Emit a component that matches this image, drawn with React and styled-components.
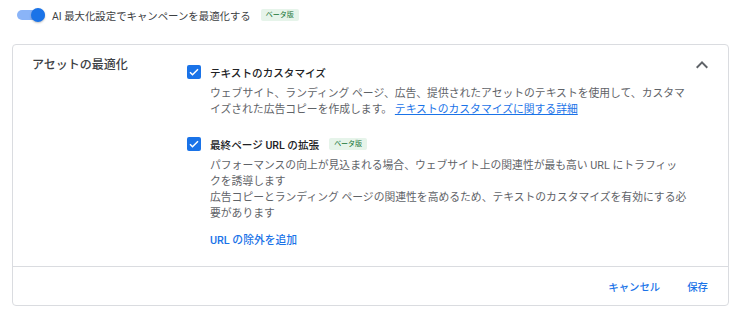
import styled, { createGlobalStyle } from "styled-components";

const GlobalStyle = createGlobalStyle`
  body {
    margin: 0;
    background: #fff;
    font-family: Roboto, "Noto Sans CJK JP", sans-serif;
    color: #3c4043;
  }
`;

const Page = styled.div`
  width: 741px;
  padding: 0 12px;
  box-sizing: border-box;
`;

const TopRow = styled.div`
  display: flex;
  align-items: center;
  height: 30px;
  padding-left: 5px;
  margin-bottom: 14px;
  font-size: 10.4px;
  color: #3c4043;
`;

const Toggle = styled.div`
  position: relative;
  width: 28px;
  height: 10px;
  border-radius: 5px;
  background: #8ab4f8;
  margin-right: 7px;
  & > span {
    position: absolute;
    right: 0;
    top: -2px;
    width: 14px;
    height: 14px;
    border-radius: 50%;
    background: #1a73e8;
    box-shadow: 0 1px 2px rgba(0, 0, 0, 0.25);
  }
`;

const Badge = styled.span`
  display: inline-block;
  margin-left: 10px;
  padding: 1px 5px;
  font-size: 7px;
  line-height: 10px;
  font-weight: 400;
  border-radius: 2px;
  background: #e6f4ea;
  color: #137333;
`;

const Card = styled.div`
  border: 1px solid #dadce0;
  border-radius: 4px;
  height: 262px;
  box-sizing: border-box;
  display: flex;
  flex-direction: column;
`;

const Body = styled.div`
  display: flex;
  padding: 10px 14px 0 19px;
  flex: 1;
  border-bottom: 1px solid #dadce0;
`;

const Title = styled.div`
  width: 155px;
  font-size: 12px;
  line-height: 20px;
  font-weight: 500;
  color: #3c4043;
`;

const Options = styled.div`
  flex: 1;
  padding-top: 7px;
`;

const Option = styled.div`
  margin-top: ${(p) => p.$gap || 0}px;
`;

const OptionHead = styled.div`
  display: flex;
  align-items: center;
  height: 20px;
  font-size: 10.6px;
  font-weight: 500;
  color: #202124;
`;

const CheckBox = styled.span`
  width: 14px;
  height: 14px;
  border-radius: 2px;
  background: #1a73e8;
  display: flex;
  align-items: center;
  justify-content: center;
  margin-right: 9px;
`;

const Desc = styled.div`
  margin: ${(p) => p.$top ?? 4}px 0 0 23px;
  max-width: 477px;
  font-size: 10.8px;
  line-height: 16px;
  color: #5f6368;
  a {
    color: #1a73e8;
    text-decoration: underline;
  }
`;

const AddLink = styled.div`
  margin: 11px 0 0 23px;
  font-size: 10.8px;
  line-height: 16px;
  font-weight: 500;
  color: #1a73e8;
`;

const Collapse = styled.div`
  width: 24px;
  height: 24px;
  margin-top: -2px;
  color: #5f6368;
`;

const Footer = styled.div`
  display: flex;
  justify-content: flex-end;
  align-items: center;
  height: 38px;
  padding-right: 12px;
  gap: 11px;
`;

const TextButton = styled.button`
  border: none;
  background: none;
  padding: 0 8px;
  height: 30px;
  font-family: inherit;
  font-size: 10.4px;
  font-weight: 500;
  color: #1a73e8;
`;

const Check = () => (
  <CheckBox>
    <svg width="12" height="12" viewBox="0 0 24 24">
      <path d="M4 12.5l5 5L20 6.5" fill="none" stroke="#fff" strokeWidth="3" />
    </svg>
  </CheckBox>
);

const App = () => {
  return (
    <Page>
      <GlobalStyle />
      <TopRow>
        <Toggle>
          <span />
        </Toggle>
        AI 最大化設定でキャンペーンを最適化する
        <Badge>ベータ版</Badge>
      </TopRow>
      <Card>
        <Body>
          <Title>アセットの最適化</Title>
          <Options>
            <Option>
              <OptionHead>
                <Check />
                テキストのカスタマイズ
              </OptionHead>
              <Desc>
                ウェブサイト、ランディング ページ、広告、提供されたアセットのテキストを使用して、カスタマイズされた広告コピーを作成します。{" "}
                <a>テキストのカスタマイズに関する詳細</a>
              </Desc>
            </Option>
            <Option $gap={16}>
              <OptionHead>
                <Check />
                最終ページ URL の拡張
                <Badge>ベータ版</Badge>
              </OptionHead>
              <Desc $top={4}>
                パフォーマンスの向上が見込まれる場合、ウェブサイト上の関連性が最も高い URL にトラフィックを誘導します
              </Desc>
              <Desc $top={0}>
                広告コピーとランディング ページの関連性を高めるため、テキストのカスタマイズを有効にする必要があります
              </Desc>
              <AddLink>URL の除外を追加</AddLink>
            </Option>
          </Options>
          <Collapse>
            <svg width="24" height="24" viewBox="0 0 24 24">
              <path
                fill="currentColor"
                d="M7.41 15.41 12 10.83l4.59 4.58L18 14l-6-6-6 6z"
              />
            </svg>
          </Collapse>
        </Body>
        <Footer>
          <TextButton>キャンセル</TextButton>
          <TextButton>保存</TextButton>
        </Footer>
      </Card>
    </Page>
  );
};

export default App;
